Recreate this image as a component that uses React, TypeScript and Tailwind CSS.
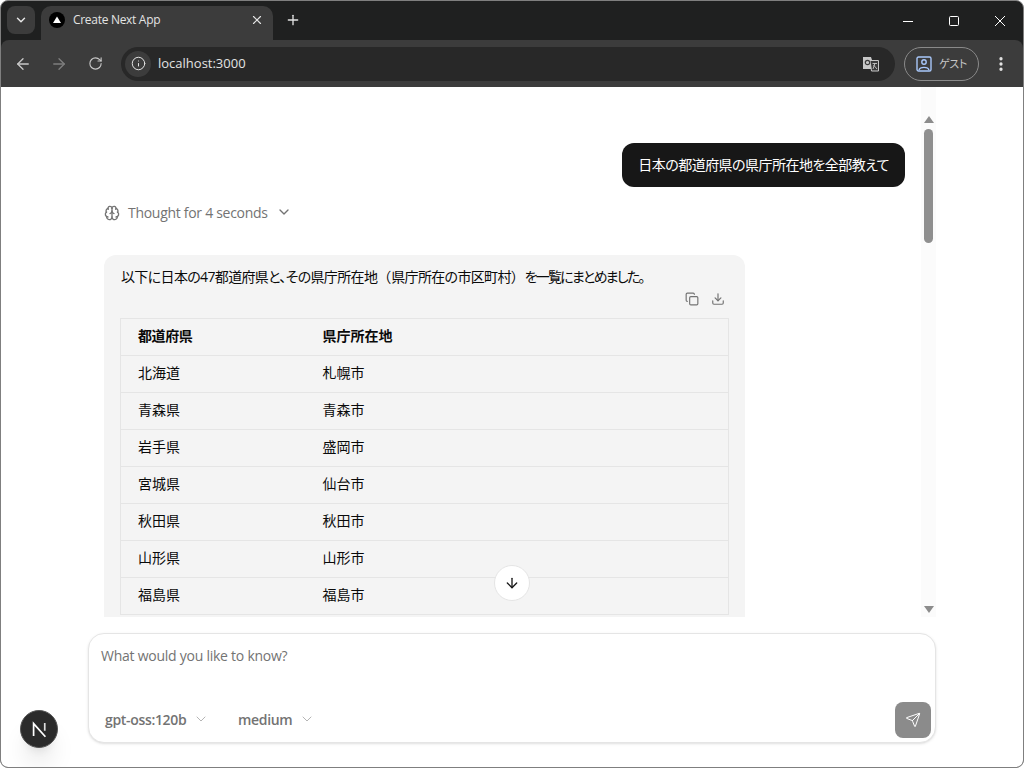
import { ArrowDown, ArrowLeft, ArrowRight, Brain, ChevronDown, Copy, Download, Info, MoreVertical, Plus, RotateCw, Send, X } from "lucide-react";

const rows = [
  ["北海道", "札幌市"],
  ["青森県", "青森市"],
  ["岩手県", "盛岡市"],
  ["宮城県", "仙台市"],
  ["秋田県", "秋田市"],
  ["山形県", "山形市"],
  ["福島県", "福島市"],
];

function BrowserChrome() {
  return (
    <div className="shrink-0 font-['Open_Sans','Noto_Sans_CJK_JP',sans-serif]">
      <div className="flex h-[39px] items-start pl-[6px] text-[#e3e3e3]">
        <button className="mt-[5px] flex h-[28px] w-[28px] items-center justify-center rounded-lg bg-[#3c3c3c]">
          <ChevronDown size={14} strokeWidth={2.5} />
        </button>
        <div className="ml-[6px] mt-[5px] flex h-[34px] w-[232px] items-center rounded-t-[10px] bg-[#3c3c3c] pb-[6px] pl-[8px] pr-[9px]">
          <svg width="16" height="16" viewBox="0 0 16 16">
            <circle cx="8" cy="8" r="8" fill="#000" />
            <path d="M8 4.5 L12 11 H4 Z" fill="#fff" />
          </svg>
          <span className="ml-[8px] flex-1 text-[12px] tracking-[-0.3px] text-[#e3e3e3]">Create Next App</span>
          <X size={14} strokeWidth={2} />
        </div>
        <Plus size={16} strokeWidth={2} className="ml-[12px] mt-[11px]" />
        <div className="ml-auto flex h-[39px] items-center text-white">
          <div className="flex h-full w-[46px] items-center justify-center">
            <svg width="12" height="12" viewBox="0 0 12 12"><path d="M1 6.5 H11" stroke="currentColor" strokeWidth="1" /></svg>
          </div>
          <div className="flex h-full w-[46px] items-center justify-center">
            <svg width="12" height="12" viewBox="0 0 12 12" fill="none"><rect x="1.5" y="1.5" width="9" height="9" rx="1" stroke="currentColor" strokeWidth="1" /></svg>
          </div>
          <div className="flex h-full w-[46px] items-center justify-center">
            <svg width="12" height="12" viewBox="0 0 12 12" fill="none"><path d="M1 1 L11 11 M11 1 L1 11" stroke="currentColor" strokeWidth="1" /></svg>
          </div>
        </div>
      </div>
      <div className="flex h-[47px] items-center rounded-t-lg bg-[#3c3c3c] pl-[13px] pr-[13px] text-[#c7c7c7]">
        <ArrowLeft size={18} strokeWidth={1.8} />
        <ArrowRight size={18} strokeWidth={1.8} className="ml-[18px] text-[#7d7d7d]" />
        <RotateCw size={15} strokeWidth={1.8} className="ml-[20px]" />
        <div className="ml-[18px] flex h-[34px] w-[774px] items-center rounded-full bg-[#282828] pl-[4px] pr-[15px]">
          <div className="flex h-[26px] w-[26px] items-center justify-center rounded-full bg-[#3c3c3c]">
            <Info size={15} strokeWidth={1.6} className="text-[#e3e3e3]" />
          </div>
          <span className="ml-[7px] flex-1 text-[13px] text-[#e3e3e3]">localhost:3000</span>
          <svg width="18" height="18" viewBox="0 0 18 18">
            <path d="M1 2 H9 L13 14 H1 Z" fill="#c7c7c7" />
            <path d="M8 5.5 H16.5 V16 H9.5 Z" fill="#3c3c3c" stroke="#c7c7c7" strokeWidth="1" />
            <circle cx="5.5" cy="7.5" r="2.2" fill="none" stroke="#3c3c3c" strokeWidth="1.2" />
            <path d="M10.5 8.5 H15 M13 8 L11 14 M11.5 10 L15 14" fill="none" stroke="#c7c7c7" strokeWidth="0.9" />
          </svg>
        </div>
        <div className="ml-[9px] flex h-[34px] w-[75px] items-center rounded-full border border-[#8a8a8a] pl-[11px]">
          <svg width="16" height="16" viewBox="0 0 16 16" fill="none" stroke="#a8c7fa" strokeWidth="1.4">
            <rect x="1" y="1" width="14" height="14" rx="1.5" />
            <circle cx="8" cy="6" r="2.2" />
            <path d="M3 14 C4 10.5 12 10.5 13 14" />
          </svg>
          <span className="ml-[7px] font-['Noto_Sans_CJK_JP',sans-serif] text-[11px] tracking-[-0.3px] text-[#c7c7c7] [font-feature-settings:'palt']">ゲスト</span>
        </div>
        <MoreVertical size={18} strokeWidth={2.4} className="ml-[13px] text-[#e3e3e3]" />
      </div>
    </div>
  );
}

function FakeScrollbar() {
  return (
    <div className="flex w-[15px] shrink-0 flex-col items-center bg-[#fbfbfb]">
      <div className="mt-[29px] h-0 w-0 border-x-[5px] border-b-[7px] border-x-transparent border-b-[#8c8c8c]" />
      <div className="mt-[6px] h-[114px] w-[9px] rounded-full bg-[#8f8f8f]" />
      <div className="mb-[4px] mt-auto h-0 w-0 border-x-[5px] border-t-[7px] border-x-transparent border-t-[#8c8c8c]" />
    </div>
  );
}

function Messages() {
  return (
    <div className="flex h-[530px] w-[848px] overflow-hidden">
      <div className="min-w-0 flex-1 overflow-hidden px-[16px] pt-[56px]">
        <div className="flex justify-end">
          <div className="rounded-xl bg-[#171717] px-[16px] py-[12px] text-[14px] leading-[20px] tracking-[-0.53px] text-white [font-feature-settings:'palt']">
            日本の都道府県の県庁所在地を全部教えて
          </div>
        </div>
        <div className="mt-[16px] flex h-[20px] items-center gap-[8px] text-[14px] text-[#737373]">
          <Brain size={16} strokeWidth={2} />
          <span className="-translate-y-px tracking-[-0.29px]">Thought for 4 seconds</span>
          <ChevronDown size={16} strokeWidth={2} className="-translate-y-px" />
        </div>
        <div className="mt-[32px] w-[641px] rounded-xl bg-[#f4f4f4] p-[16px] pt-[12px] text-[14px] text-[#0a0a0a]">
          <p className="pl-px leading-[20px] [font-feature-settings:'palt']">
            <span className="tracking-[-0.65px]">以下に日本の47都道府県と、その県庁所在地</span>
            <span className="[font-feature-settings:normal]">（</span>
            <span className="tracking-[-0.67px]">県庁所在の市区町村</span>
            <span className="[font-feature-settings:normal]">）</span>
            <span className="tracking-[-1.8px]">を一覧にまとめました。</span>
          </p>
          <div className="mt-[4px] flex h-[16px] items-center justify-end gap-[12px] pr-[4px] text-[#737373]">
            <Copy size={14} strokeWidth={2} />
            <Download size={14} strokeWidth={2} />
          </div>
          <table className="mt-[11px] w-full table-fixed border-collapse border border-[#e5e5e5]">
            <colgroup>
              <col className="w-[186px]" />
              <col />
            </colgroup>
            <thead>
              <tr className="h-[37px] border-b border-[#e5e5e5]">
                <th className="pb-[3px] pl-[17px] pr-[16px] text-left font-bold tracking-[-0.4px]">都道府県</th>
                <th className="px-[16px] pb-[3px] text-left font-bold">県庁所在地</th>
              </tr>
            </thead>
            <tbody>
              {rows.map((row) => (
                <tr key={row[0]} className="h-[37px] border-b border-[#e5e5e5]">
                  <td className="pb-[3px] pl-[17px] pr-[16px]">{row[0]}</td>
                  <td className="px-[16px] pb-[3px]">{row[1]}</td>
                </tr>
              ))}
            </tbody>
          </table>
        </div>
      </div>
      <FakeScrollbar />
    </div>
  );
}

function PromptBox() {
  return (
    <div className="mt-[16px] flex h-[110px] w-[848px] flex-col rounded-2xl border border-[#e5e5e5] bg-white shadow-sm">
      <div className="px-[12px] pt-[12px] text-[14px] leading-[20px] tracking-[-0.25px] text-[#737373]">What would you like to know?</div>
      <div className="mt-auto flex items-center pb-[4px] pl-[16px] pr-[4px]">
        <div className="flex w-[133px] -translate-y-px items-center gap-[7px] text-[14px] font-semibold tracking-[-0.33px] text-[#737373]">
          gpt-oss:120b
          <ChevronDown size={16} strokeWidth={1.5} className="text-[#b5b5b5]" />
        </div>
        <div className="flex -translate-y-px items-center gap-[7px] text-[14px] font-semibold tracking-[-0.33px] text-[#737373]">
          medium
          <ChevronDown size={16} strokeWidth={1.5} className="text-[#b5b5b5]" />
        </div>
        <button className="ml-auto flex h-[36px] w-[36px] items-center justify-center rounded-lg bg-[#8b8b8b] text-white">
          <Send size={16} strokeWidth={1.5} />
        </button>
      </div>
    </div>
  );
}

export default function App() {
  return (
    <div className="flex h-[768px] w-[1024px] flex-col overflow-hidden rounded-lg border border-[#7f7f7f] bg-[#1f2020]">
      <BrowserChrome />
      <main className="relative flex min-h-0 flex-1 flex-col items-center bg-white font-['Open_Sans','Noto_Sans_CJK_JP',sans-serif]">
        <Messages />
        <PromptBox />
        <button className="absolute left-[493px] top-[478px] flex h-[36px] w-[36px] items-center justify-center rounded-full border border-[#e5e5e5] bg-white text-[#171717]">
          <ArrowDown size={16} strokeWidth={2} />
        </button>
        <div className="absolute left-[19px] top-[623px] flex h-[38px] w-[38px] items-center justify-center rounded-full border border-[#555] bg-[#2b2b2b] shadow-xl">
          <svg width="21" height="21" viewBox="0 0 16 16" fill="none">
            <path d="M3.5 13 V3.5 L12.5 13.5" stroke="#fff" strokeWidth="1.3" />
            <path d="M12 3 V9" stroke="#ddd" strokeWidth="1.3" />
          </svg>
        </div>
      </main>
    </div>
  );
}
